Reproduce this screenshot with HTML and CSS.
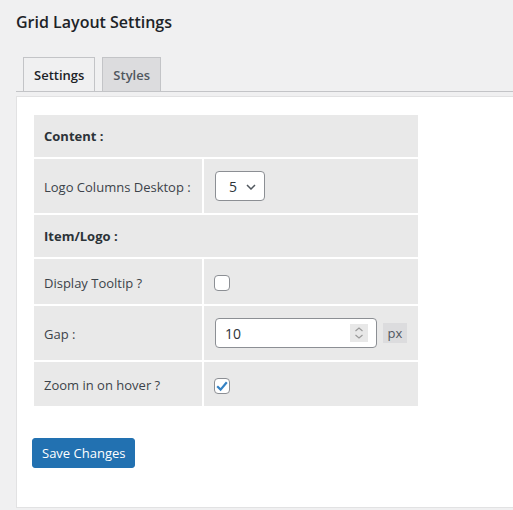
FILE: index.html
```html
<!DOCTYPE html>
<html lang="en">
<head>
<meta charset="utf-8">
<title>Grid Layout Settings</title>
<link rel="stylesheet" href="styles.css">
</head>
<body>
<div class="wrap">
  <h1 class="title">Grid Layout Settings</h1>
  <nav class="tabs">
    <span class="tab tab-active">Settings</span>
    <span class="tab">Styles</span>
  </nav>
  <div class="panel">
    <div class="form-grid">
      <div class="cell cell-head">Content :</div>
      <div class="cell">Logo Columns Desktop :</div>
      <div class="cell cell-field">
        <div class="select">
          <span class="select-value">5</span>
          <svg class="chev" width="10" height="6" viewBox="0 0 10 6"><path d="M1 1 L5 5 L9 1" fill="none" stroke="#50575e" stroke-width="1.5"/></svg>
        </div>
      </div>
      <div class="cell cell-head">Item/Logo :</div>
      <div class="cell">Display Tooltip ?</div>
      <div class="cell cell-field"><span class="checkbox"></span></div>
      <div class="cell">Gap :</div>
      <div class="cell cell-field">
        <div class="num">
          <span class="num-value">10</span>
          <span class="spin">
            <svg width="18" height="18" viewBox="0 0 18 18"><path d="M5.5 7 L9 4 L12.5 7" fill="none" stroke="#9a9a9a" stroke-width="1.2"/><path d="M5.5 11 L9 14 L12.5 11" fill="none" stroke="#9a9a9a" stroke-width="1.2"/></svg>
          </span>
        </div>
        <span class="unit">px</span>
      </div>
      <div class="cell">Zoom in on hover ?</div>
      <div class="cell cell-field">
        <span class="checkbox">
          <svg width="14" height="14" viewBox="0 0 14 14"><path d="M2.2 7.2 L5.6 10.6 L11.8 3.2" fill="none" stroke="#3582c4" stroke-width="2.2"/></svg>
        </span>
      </div>
    </div>
    <button class="btn-primary" type="button">Save Changes</button>
  </div>
</div>
</body>
</html>
```

FILE: styles.css
```css
html, body {
  margin: 0;
  padding: 0;
  background: #f0f0f1;
  overflow: hidden;
}

body {
  font-family: "Open Sans", "Noto Sans", sans-serif;
  font-size: 13px;
  color: #3c434a;
}

.wrap {
  padding-left: 16px;
}

.title {
  margin: 0;
  padding-top: 11px;
  font-size: 16px;
  line-height: 22px;
  font-weight: 600;
  color: #1d2327;
}

.tabs {
  display: flex;
  align-items: flex-end;
  gap: 7px;
  margin-top: 24px;
  padding-left: 7px;
  border-bottom: 1px solid #c3c4c7;
}

.tab {
  display: block;
  height: 33px;
  line-height: 34px;
  padding: 0 10px;
  border: 1px solid #c3c4c7;
  border-bottom: none;
  background: #dcdcde;
  color: #50575e;
  font-size: 13px;
  font-weight: 600;
}

.tab-active {
  background: #f0f0f1;
  color: #1d2327;
}

.panel {
  margin-top: 4px;
  background: #fff;
  border: 1px solid #e2e2e3;
  border-right: none;
  padding: 18px 0 39px 17px;
}

.form-grid {
  display: grid;
  grid-template-columns: 168px 214px;
  grid-template-rows: 42px 54px 42px 45px 54px 44px;
  gap: 2px;
  width: 384px;
}

.cell {
  background: #e9e9e9;
  display: flex;
  align-items: center;
  padding-left: 10px;
  padding-top: 2px;
}

.cell-head {
  grid-column: 1 / 3;
  font-weight: 700;
  color: #2c3338;
  padding-top: 0;
}

.cell-field {
  padding-left: 11px;
  padding-top: 0;
}

.select {
  width: 50px;
  height: 30px;
  box-sizing: border-box;
  border: 1px solid #8c8f94;
  border-radius: 4px;
  background: #fff;
  display: flex;
  align-items: center;
  padding-left: 13px;
  padding-right: 8px;
  font-size: 14px;
  color: #2c3338;
}

.chev {
  margin-left: auto;
  margin-top: 1px;
}

.checkbox {
  width: 16px;
  height: 16px;
  box-sizing: border-box;
  border: 1px solid #8c8f94;
  border-radius: 4px;
  background: #fff;
  margin-left: -1px;
  margin-top: 3px;
  display: flex;
  align-items: center;
  justify-content: center;
}

.num {
  width: 162px;
  height: 30px;
  box-sizing: border-box;
  border: 1px solid #8c8f94;
  border-radius: 4px;
  background: #fff;
  display: flex;
  align-items: center;
  padding-left: 9px;
  padding-right: 8px;
  font-size: 14px;
  color: #2c3338;
}

.spin {
  margin-left: auto;
  width: 18px;
  height: 18px;
  background: #e8e8e8;
  display: flex;
}

.unit {
  margin-left: 6px;
  width: 24px;
  height: 20px;
  background: #dcdcde;
  color: #50575e;
  font-size: 13px;
  line-height: 20px;
  text-align: center;
}

.btn-primary {
  display: block;
  margin-top: 32px;
  margin-left: -2px;
  height: 30px;
  padding: 0 9px;
  border: 1px solid #2271b1;
  border-radius: 3px;
  background: #2271b1;
  color: #fff;
  font-family: "Open Sans", "Noto Sans", sans-serif;
  font-size: 13px;
}
```
